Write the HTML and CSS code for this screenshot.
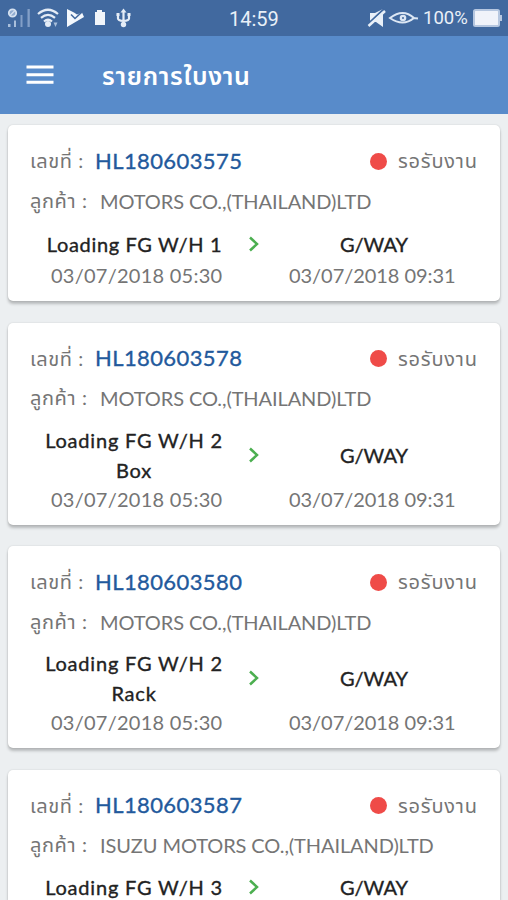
FILE: index.html
```
<!DOCTYPE html>
<html lang="th">
<head>
<meta charset="utf-8">
<title>รายการใบงาน</title>
<link rel="stylesheet" href="styles.css">
</head>
<body>
<div class="status">
  <svg class="status-icons" width="140" height="36" viewBox="0 0 140 36" fill="#e4ecf6">
    <circle cx="12.500" cy="13" r="3.700" fill="#8fabd0" stroke="#d5e1f0" stroke-width="1.800"/>
    <path d="M10 15.500l5-5" stroke="#d5e1f0" stroke-width="1.300"/>
    <path d="M8 24h2.500v3H8zM14 20.500h2v6.500h-2z" fill="#a9bfdb"/>
    <path d="M20.500 15h2v12h-2zM27.500 9h2.300v18h-2.300z" fill="#839fc7"/>
    <g fill="none" stroke="#e4ecf6" stroke-width="2.200"><path d="M38 14q10-8.500 20 0M41 17.800q7-6 14 0M44 21.500q4-3.500 8 0"/></g>
    <circle cx="48" cy="24" r="3"/><path d="M53.500 22.500h4l-2 4.500z" fill="#a9bfdb"/>
    <path d="M67 9l7 3.500 3 2 5-2 2 4.500L67 27z" fill="#f4f8fd"/>
    <path d="M71 14.500l4 4 7-6.500" fill="none" stroke="#41699f" stroke-width="1.600"/>
    <path d="M97 10h5v2h3v13H95V12h2z" fill="#f1f5fa"/>
    <g fill="none" stroke="#e4ecf6" stroke-width="2.200"><path d="M123.500 11v13M118 14v4.500q0 2 5.500 2.500M129 14v4.500q0 2-5.500 2.500"/></g>
    <path d="M120.500 12.500l3-4 3 4zM116.500 13h3v3h-3zM127.500 13h3v3h-3z"/><circle cx="123.500" cy="24.500" r="2.700"/>
  </svg>
  <span class="clock">14:59</span>
  <svg class="status-view" width="56" height="36" viewBox="0 0 56 36">
    <path d="M3 13h5l8-4v18l-7-5H3z" fill="#e9f0f8"/>
    <path d="M1 24L17 9" stroke="#41699f" stroke-width="2"/><path d="M1.500 26L18 11" stroke="#e9f0f8" stroke-width="2.500"/>
    <path d="M23 18q13-10 24 0q-11 9-24 0zM46 18l5 .500" fill="none" stroke="#dce7f4" stroke-width="2"/>
    <circle cx="36" cy="18" r="3.300" fill="#dce7f4"/><circle cx="36" cy="18" r="1" fill="#41699f"/>
  </svg>
  <span class="percent">100%</span>
  <svg class="battery" width="30" height="36" viewBox="0 0 30 36"><rect x="1" y="10" width="25" height="16" rx="1.500" fill="#f0f3fa" stroke="#b6c7e0" stroke-width="2"/><path d="M27 15h2v6h-2z" fill="#b6c7e0"/></svg>
</div>
<header class="bar">
  <svg class="menu" width="28" height="22" viewBox="0 0 28 22" fill="none" stroke="#fff" stroke-width="3"><path d="M.5 3h27M.5 10.700h27M.5 18.300h27"/></svg>
  <h1 class="title">รายการใบงาน</h1>
</header>
<main class="list">
  <article class="card card-short">
    <div class="head"><span class="label">เลขที่ :</span><span class="number">HL180603575</span><span class="dot"></span><span class="state">รอรับงาน</span></div>
    <div class="customer"><span class="label">ลูกค้า :</span><span class="company">MOTORS CO.,(THAILAND)LTD</span></div>
    <div class="route"><span class="place">Loading FG W/H 1</span><svg class="arrow" viewBox="0 0 12 16"><path d="M2 1.500L9 8l-7 6.500"/></svg><span class="place dest">G/WAY</span></div>
    <div class="dates"><span class="from">03/07/2018 05:30</span><span class="to">03/07/2018 09:31</span></div>
  </article>
  <article class="card">
    <div class="head"><span class="label">เลขที่ :</span><span class="number">HL180603578</span><span class="dot"></span><span class="state">รอรับงาน</span></div>
    <div class="customer"><span class="label">ลูกค้า :</span><span class="company">MOTORS CO.,(THAILAND)LTD</span></div>
    <div class="route"><span class="place">Loading FG W/H 2<br>Box</span><svg class="arrow" viewBox="0 0 12 16"><path d="M2 1.500L9 8l-7 6.500"/></svg><span class="place dest">G/WAY</span></div>
    <div class="dates"><span class="from">03/07/2018 05:30</span><span class="to">03/07/2018 09:31</span></div>
  </article>
  <article class="card">
    <div class="head"><span class="label">เลขที่ :</span><span class="number">HL180603580</span><span class="dot"></span><span class="state">รอรับงาน</span></div>
    <div class="customer"><span class="label">ลูกค้า :</span><span class="company">MOTORS CO.,(THAILAND)LTD</span></div>
    <div class="route"><span class="place">Loading FG W/H 2<br>Rack</span><svg class="arrow" viewBox="0 0 12 16"><path d="M2 1.500L9 8l-7 6.500"/></svg><span class="place dest">G/WAY</span></div>
    <div class="dates"><span class="from">03/07/2018 05:30</span><span class="to">03/07/2018 09:31</span></div>
  </article>
  <article class="card card-cut">
    <div class="head"><span class="label">เลขที่ :</span><span class="number">HL180603587</span><span class="dot"></span><span class="state">รอรับงาน</span></div>
    <div class="customer"><span class="label">ลูกค้า :</span><span class="company">ISUZU MOTORS CO.,(THAILAND)LTD</span></div>
    <div class="route"><span class="place">Loading FG W/H 3</span><svg class="arrow" viewBox="0 0 12 16"><path d="M2 1.500L9 8l-7 6.500"/></svg><span class="place dest">G/WAY</span></div>
  </article>
</main>
</body>
</html>
```
FILE: styles.css
```
* { box-sizing: border-box; }
body {
  margin: 0;
  height: 900px;
  overflow: hidden;
  display: flex;
  flex-direction: column;
  background: #eceff1;
  color: #757575;
  font-family: Lato, "Noto Sans Thai", "Noto Sans", sans-serif;
  font-size: 20px;
}
.status {
  flex: none;
  height: 36px;
  display: flex;
  align-items: center;
  background: #41699f;
  color: #e9f0f8;
  font-family: Roboto, sans-serif;
}
.clock { margin-left: 89px; width: 50px; font-size: 20px; line-height: 36px; white-space: nowrap; padding-top: 2px; }
.status-view { margin-left: 88px; }
.percent { width: 50px; font-size: 18.5px; white-space: nowrap; }
.bar {
  flex: none;
  height: 78px;
  display: flex;
  align-items: center;
  background: #588bca;
  padding: 0 26px;
}
.menu { margin-top: -1px; }
.title { margin: 0 0 0 48px; color: #fff; font-size: 25px; font-weight: 600; line-height: 40px; letter-spacing: .7px; white-space: nowrap; }
.list { flex: 1; min-height: 0; padding: 11px 8px 0; display: flex; flex-direction: column; gap: 21.5px; }
.card {
  flex: none;
  height: 202px;
  padding: 16px 0 0;
  background: #fff;
  border-radius: 5px;
  box-shadow: 0 3px 3px rgba(0, 0, 0, .22), 0 0 2px rgba(0, 0, 0, .14);
}
.card-short { height: 176px; }
.card-cut { flex: 1; min-height: 0; border-radius: 5px 5px 0 0; }
.head, .customer { height: 40px; display: flex; align-items: center; padding: 0 22px; white-space: nowrap; }
.customer { height: 39px; }
.label { width: 65px; padding-top: 2px; font-size: 20px; letter-spacing: .6px; }
.customer .label { width: 70px; }
.number { margin-top: -2px; font-size: 22px; color: #22599c; letter-spacing: .4px; -webkit-text-stroke: .35px #22599c; }
.dot { width: 17px; height: 17px; border-radius: 50%; background: #ef4b48; margin-left: auto; }
.state { width: 80px; margin-left: 11px; padding-top: 2px; font-size: 20px; letter-spacing: .8px; }
.company { letter-spacing: -.1px; }
.route { display: grid; grid-template-columns: 212px 28px 212px; margin: 7px 0 0 20px; align-items: center; line-height: 30px; }
.card-short .route { margin-top: 9px; }
.place { color: #222; text-align: center; letter-spacing: .8px; -webkit-text-stroke: .35px #222; }
.card-short .place:first-child { letter-spacing: .65px; padding-left: 1px; }
.route .dest { letter-spacing: 0; }
.arrow { width: 12px; height: 16px; justify-self: center; fill: none; stroke: #4caf50; stroke-width: 2.5; }
.dates { display: flex; height: 28px; line-height: 28px; white-space: nowrap; }
.from { width: 238px; padding-left: 43px; letter-spacing: .25px; }
.to { padding-left: 43px; letter-spacing: -.05px; }
.card-short .dates { height: 32px; line-height: 32px; }
```
